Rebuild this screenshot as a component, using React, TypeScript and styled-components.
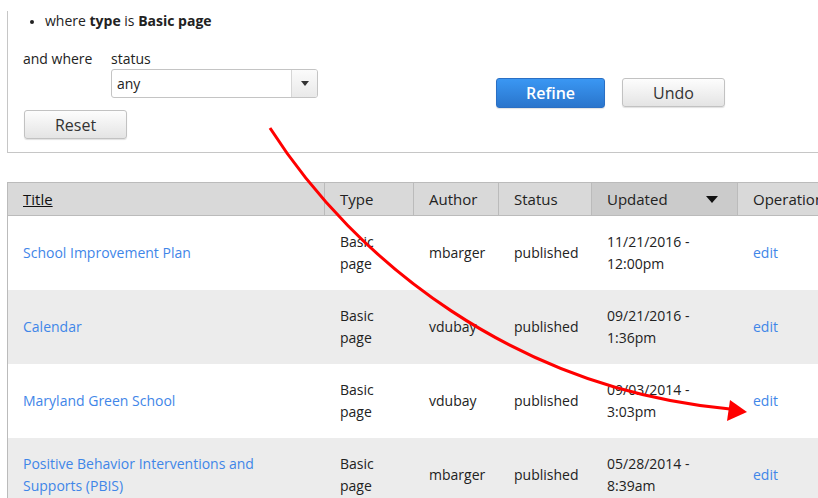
import React from "react";
import styled, { createGlobalStyle } from "styled-components";

const Global = createGlobalStyle`
  html, body { margin: 0; padding: 0; background: #fff; }
  body {
    width: 818px; height: 498px; overflow: hidden;
    font-family: "Open Sans", "Noto Sans", sans-serif;
    font-size: 14px; color: #222;
  }
`;

const Page = styled.div`
  position: relative;
  padding-left: 7px;
  width: 1000px;
`;

const Fieldset = styled.div`
  border: 1px solid #c6c6c6;
  border-top: none;
  padding: 0 0 13px 15px;
  width: 960px;
`;

const BulletList = styled.ul`
  margin: 11px 0 18px 0;
  padding-left: 22px;
  line-height: 20px;
  font-size: 14px;
  li::marker { font-size: 11px; }
`;

const FilterArea = styled.div`
  display: flex;
  align-items: flex-start;
`;

const LeftCol = styled.div`
  display: flex;
  flex-direction: column;
  align-items: flex-start;
`;

const WhereRow = styled.div`
  display: flex;
  align-items: flex-start;
`;

const WhereLabel = styled.div`
  width: 88px;
  line-height: 20px;
`;

const StatusGroup = styled.div`
  display: flex;
  flex-direction: column;
`;

const Label = styled.div`
  line-height: 20px;
`;

const Select = styled.div`
  width: 207px;
  height: 29px;
  box-sizing: border-box;
  border: 1px solid #c4c4c4;
  border-radius: 3px;
  display: flex;
  align-items: stretch;
  background: #fff;
`;

const SelectValue = styled.div`
  flex: 1;
  padding-left: 5px;
  line-height: 27px;
`;

const SelectArrow = styled.div`
  width: 25px;
  border-left: 1px solid #d6d6d6;
  background: linear-gradient(#fbfbfb, #e9e9e9);
  display: flex;
  align-items: center;
  justify-content: center;
  border-radius: 0 2px 2px 0;
  &::after {
    content: "";
    border-left: 4px solid transparent;
    border-right: 4px solid transparent;
    border-top: 5px solid #333;
  }
`;

const Button = styled.button<{ $primary?: boolean; $w: number }>`
  width: ${(p) => p.$w}px;
  height: ${(p) => (p.$primary ? 30 : 29)}px;
  box-sizing: border-box;
  border-radius: 3px;
  font-family: "Open Sans", "Noto Sans", sans-serif;
  font-size: 16px;
  font-weight: ${(p) => (p.$primary ? 600 : 400)};
  padding: 0;
  cursor: pointer;
  color: ${(p) => (p.$primary ? "#fff" : "#333")};
  border: 1px solid ${(p) => (p.$primary ? "#2a6fc4" : "#c2c2c2")};
  background: ${(p) =>
    p.$primary
      ? "linear-gradient(#3a97f3, #2a75cc)"
      : "linear-gradient(#fdfdfd, #e4e4e4)"};
  box-shadow: 0 1px 1px rgba(0, 0, 0, 0.12);
`;

const ResetButton = styled(Button)`
  margin-top: 12px;
  margin-left: 1px;
`;

const Actions = styled.div`
  display: flex;
  gap: 17px;
  margin-left: 178px;
  margin-top: 29px;
`;

const Table = styled.table`
  margin-top: 29px;
  border-spacing: 0;
  table-layout: fixed;
  width: 878px;
  border-top: 1px solid #bbb;
  border-left: 1px solid #bbb;
`;

const Th = styled.th<{ $w: number; $active?: boolean }>`
  width: ${(p) => p.$w}px;
  box-sizing: border-box;
  height: 33px;
  padding: 0 0 0 15px;
  text-align: left;
  font-weight: 400;
  font-size: 15px;
  color: #222;
  background: ${(p) => (p.$active ? "#cbcbcb" : "#d9d9d9")};
  border-right: 1px solid #bbb;
  border-bottom: 1px solid #bbb;
  white-space: nowrap;
  overflow: hidden;
`;

const ThInner = styled.div`
  display: flex;
  align-items: center;
  justify-content: space-between;
  padding-right: 19px;
`;

const SortTriangle = styled.span`
  border-left: 6px solid transparent;
  border-right: 6px solid transparent;
  border-top: 7px solid #111;
`;

const HeadLink = styled.span`
  text-decoration: underline;
  color: #111;
`;

const Tr = styled.tr<{ $alt: boolean }>`
  background: ${(p) => (p.$alt ? "#ececec" : "#fff")};
`;

const Td = styled.td`
  height: 74px;
  box-sizing: border-box;
  padding: 0 12px 0 15px;
  line-height: 22px;
  vertical-align: middle;
  font-size: 14px;
  color: #222;
`;

const Link = styled.a`
  color: #3f86e8;
  text-decoration: none;
`;

const ArrowOverlay = styled.svg`
  position: absolute;
  left: 0;
  top: 0;
  pointer-events: none;
`;

type Row = { title: string; author: string; date: string; time: string };

const rows: Row[] = [
  { title: "School Improvement Plan", author: "mbarger", date: "11/21/2016 -", time: "12:00pm" },
  { title: "Calendar", author: "vdubay", date: "09/21/2016 -", time: "1:36pm" },
  { title: "Maryland Green School", author: "vdubay", date: "09/03/2014 -", time: "3:03pm" },
  { title: "Positive Behavior Interventions and Supports (PBIS)", author: "mbarger", date: "05/28/2014 -", time: "8:39am" },
];

export default function App() {
  return (
    <>
      <Global />
      <Page>
        <Fieldset>
          <BulletList>
            <li>
              where <b>type</b> is <b>Basic page</b>
            </li>
          </BulletList>
          <FilterArea>
            <LeftCol>
              <WhereRow>
                <WhereLabel>and where</WhereLabel>
                <StatusGroup>
                  <Label>status</Label>
                  <Select>
                    <SelectValue>any</SelectValue>
                    <SelectArrow />
                  </Select>
                </StatusGroup>
              </WhereRow>
              <ResetButton $w={103}>Reset</ResetButton>
            </LeftCol>
            <Actions>
              <Button $primary $w={109}>Refine</Button>
              <Button $w={103}>Undo</Button>
            </Actions>
          </FilterArea>
        </Fieldset>

        <Table>
          <thead>
            <tr>
              <Th $w={317}><HeadLink>Title</HeadLink></Th>
              <Th $w={89}>Type</Th>
              <Th $w={85}>Author</Th>
              <Th $w={93}>Status</Th>
              <Th $w={146} $active>
                <ThInner>
                  Updated <SortTriangle />
                </ThInner>
              </Th>
              <Th $w={147}>Operations</Th>
            </tr>
          </thead>
          <tbody>
            {rows.map((r, i) => (
              <Tr key={r.title} $alt={i % 2 === 1}>
                <Td><Link href="#">{r.title}</Link></Td>
                <Td>Basic<br />page</Td>
                <Td>{r.author}</Td>
                <Td>published</Td>
                <Td>{r.date}<br />{r.time}</Td>
                <Td><Link href="#">edit</Link></Td>
              </Tr>
            ))}
          </tbody>
        </Table>

        <ArrowOverlay width="818" height="498" viewBox="0 0 818 498">
          <path d="M270,117 C355,250 515,378 730,398" fill="none" stroke="#f00" strokeWidth="3" />
          <polygon points="747,401 730,389 727,410" fill="#f00" />
        </ArrowOverlay>
      </Page>
    </>
  );
}
